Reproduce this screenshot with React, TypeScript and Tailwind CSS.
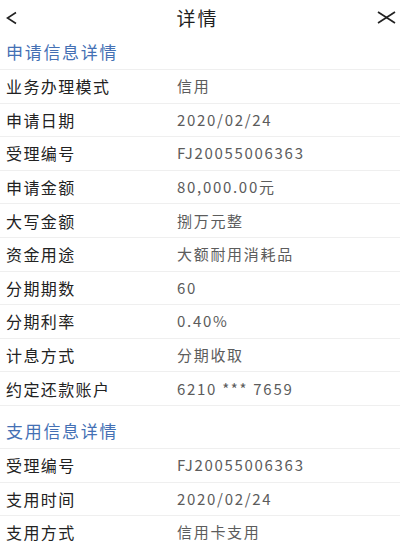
import React from "react";

const apply = [
  ["业务办理模式", "信用"],
  ["申请日期", "2020/02/24"],
  ["受理编号", "FJ20055006363"],
  ["申请金额", "80,000.00元"],
  ["大写金额", "捌万元整"],
  ["资金用途", "大额耐用消耗品"],
  ["分期期数", "60"],
  ["分期利率", "0.40%"],
  ["计息方式", "分期收取"],
  ["约定还款账户", "6210 *** 7659"],
];

const draw = [
  ["受理编号", "FJ20055006363"],
  ["支用时间", "2020/02/24"],
  ["支用方式", "信用卡支用"],
];

function Row({ label, value }: { label: string; value: string }) {
  return (
    <div className="flex h-[33.6px] items-center border-b border-[#efefef] pl-[6px] leading-[20px]">
      <span className="w-[171px] text-[16px] tracking-[1.4px] text-[#222222]">{label}</span>
      <span className="text-[15px] tracking-[1.7px] text-[#5c5c5c]">{value}</span>
    </div>
  );
}

function SectionTitle({ children }: { children: React.ReactNode }) {
  return (
    <div className="flex h-[35px] items-center border-b border-[#efefef] pl-[6px] text-[17px] leading-[22px] tracking-[1.7px] text-[#4470b4]">
      {children}
    </div>
  );
}

export default function App() {
  return (
    <div
      className="h-[542px] w-[400px] overflow-hidden bg-white"
      style={{ fontFamily: '"Noto Sans CJK SC", "Noto Sans", sans-serif' }}
    >
      <div className="flex h-[35px] items-center justify-between px-[5px]">
        <svg width="12" height="14" viewBox="0 0 12 14" className="ml-[1px]">
          <polyline points="10,1.5 1.5,7 10,12.5" fill="none" stroke="#222" strokeWidth="1.6" />
        </svg>
        <span className="text-[19px] leading-[24px] tracking-[2px] text-[#1e1e1e]">详情</span>
        <svg width="19" height="13" viewBox="0 0 19 13" className="mr-[-1px]">
          <line x1="1" y1="1" x2="18" y2="12" stroke="#222" strokeWidth="1.7" />
          <line x1="18" y1="1" x2="1" y2="12" stroke="#222" strokeWidth="1.7" />
        </svg>
      </div>

      <SectionTitle>申请信息详情</SectionTitle>
      {apply.map(([l, v]) => (
        <Row key={l} label={l} value={v} />
      ))}

      <div className="mt-[8px]">
        <SectionTitle>支用信息详情</SectionTitle>
        {draw.map(([l, v]) => (
          <Row key={l + v} label={l} value={v} />
        ))}
      </div>
    </div>
  );
}
